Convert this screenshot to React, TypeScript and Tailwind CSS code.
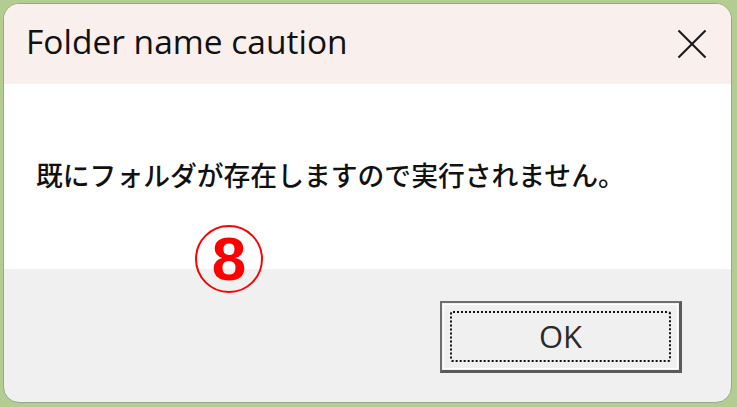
import React from "react";

export default function App() {
  return (
    <div className="w-[737px] h-[407px] bg-[#b3cd90] pt-[3px] pl-[3px] pr-[5px] pb-[4px]">
      <div className="relative flex flex-col w-full h-full rounded-[16px] overflow-hidden border border-[#9aa48f] bg-[#f0f0f0]">
        {/* Title bar */}
        <div className="h-[80px] shrink-0 bg-[#f9efed] flex items-center justify-between pl-[22px] pr-[24px]">
          <span
            className="text-[33.5px] text-[#111] leading-none pb-[4px]"
            style={{ fontFamily: '"Open Sans", "Noto Sans", sans-serif' }}
          >
            Folder name caution
          </span>
          <svg width="30" height="30" viewBox="0 0 30 30" fill="none">
            <path d="M1.5 1.5L28.5 28.5" stroke="#1a1a1a" strokeWidth="2.2" />
            <path d="M28.5 1.5L1.5 28.5" stroke="#1a1a1a" strokeWidth="2.2" />
          </svg>
        </div>

        {/* Message */}
        <div className="h-[185px] shrink-0 bg-white flex items-center pl-[32px] pb-[2px]">
          <p
            className="text-[26.8px] font-medium text-[#111] leading-none"
            style={{ fontFamily: '"Noto Sans CJK JP", sans-serif' }}
          >
            既にフォルダが存在しますので実行されません。
          </p>
        </div>

        {/* Footer */}
        <div className="flex-1 flex justify-end items-start pt-[32px] pr-[49px]">
          <button className="w-[242px] h-[72px] border-2 border-[#6e6e6e] border-r-[3px] border-b-[3px] border-r-[#5a5a5a] border-b-[#5a5a5a] bg-[#f0f0f0] p-[1px]">
            <div className="w-full h-full border border-white p-[6px]">
              <div
                className="w-full h-full border-2 border-dotted border-[#111] rounded-[3px] flex items-center justify-center text-[31px] text-[#2a2a2a] leading-none"
                style={{ fontFamily: '"Open Sans", "Noto Sans", sans-serif' }}
              >
                OK
              </div>
            </div>
          </button>
        </div>

        {/* Annotation marker */}
        <div className="absolute left-[191px] top-[221px] w-[68px] h-[68px] rounded-full border-[2.5px] border-[#ff0000] flex items-center justify-center">
          <span
            className="text-[62px] font-bold text-[#ff0000] leading-none"
            style={{ fontFamily: '"Liberation Sans", Arial, sans-serif' }}
          >
            8
          </span>
        </div>
      </div>
    </div>
  );
}
